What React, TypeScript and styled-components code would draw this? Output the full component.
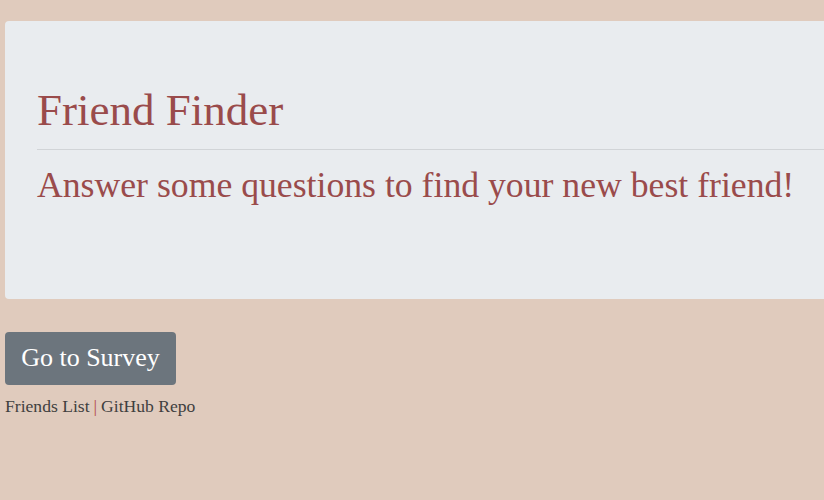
import React from "react";
import styled, { createGlobalStyle } from "styled-components";

const Global = createGlobalStyle`
  html, body { margin: 0; padding: 0; background: #e0cbbd; overflow: hidden; }
  body { font-family: "Liberation Serif", "DejaVu Serif", serif; }
`;

const Page = styled.div`
  width: 824px;
  height: 500px;
  overflow: hidden;
  padding: 21px 0 0 5px;
  box-sizing: border-box;
`;

const Jumbotron = styled.section`
  width: 900px;
  box-sizing: border-box;
  background: #e9ecef;
  border-radius: 4px;
  padding: 62px 32px 0 32px;
  height: 278px;
`;

const Title = styled.h1`
  margin: 0;
  font-weight: 400;
  font-size: 45px;
  line-height: 54px;
  color: #9a4b4b;
`;

const Rule = styled.hr`
  margin: 12px 0 13px 0;
  border: 0;
  border-top: 1px solid #d1d4d7;
`;

const Lead = styled.p`
  margin: 0;
  font-size: 35.7px;
  line-height: 44px;
  color: #9a4b4b;
`;

const Button = styled.a`
  display: inline-flex;
  align-items: center;
  justify-content: center;
  margin-top: 33px;
  width: 171px;
  height: 53px;
  padding-bottom: 2px;
  box-sizing: border-box;
  background: #6c757d;
  color: #fff;
  border-radius: 4px;
  font-size: 26px;
  text-decoration: none;
`;

const Links = styled.div`
  margin-top: 11px;
  font-size: 17.6px;
  color: #3f3f3f;
  display: flex;
  align-items: center;
`;

const Link = styled.a`
  color: #3f3f3f;
  text-decoration: none;
`;

const Sep = styled.span`
  color: #b24a4a;
  margin: 0 4px;
`;

export default function App() {
  return (
    <>
      <Global />
      <Page>
        <Jumbotron>
          <Title>Friend Finder</Title>
          <Rule />
          <Lead>Answer some questions to find your new best friend!</Lead>
        </Jumbotron>
        <Button href="#">Go to Survey</Button>
        <Links>
          <Link href="#">Friends List</Link>
          <Sep>|</Sep>
          <Link href="#">GitHub Repo</Link>
        </Links>
      </Page>
    </>
  );
}
